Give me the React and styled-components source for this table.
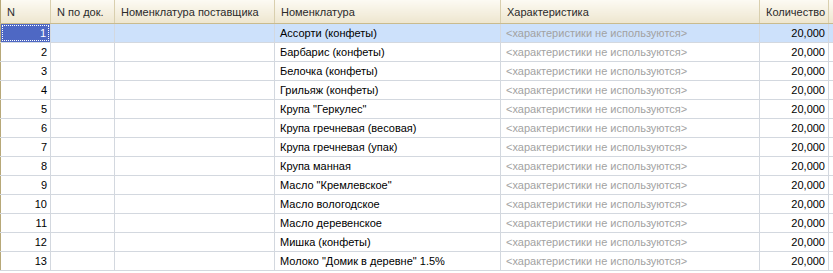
import React from "react";
import styled, { createGlobalStyle } from "styled-components";

const Global = createGlobalStyle`
  body {
    margin: 0;
    background: #ffffff;
    font-family: "Liberation Sans", Arial, sans-serif;
  }
`;

const columns = [
  { title: "N", width: 50 },
  { title: "N по док.", width: 64 },
  { title: "Номенклатура поставщика", width: 160 },
  { title: "Номенклатура", width: 226 },
  { title: "Характеристика", width: 259 },
  { title: "Количество", width: 69 },
  { title: "", width: 5 },
];

const items = [
  "Ассорти (конфеты)",
  "Барбарис (конфеты)",
  "Белочка (конфеты)",
  "Грильяж (конфеты)",
  "Крупа \"Геркулес\"",
  "Крупа гречневая (весовая)",
  "Крупа гречневая (упак)",
  "Крупа манная",
  "Масло \"Кремлевское\"",
  "Масло вологодское",
  "Масло деревенское",
  "Мишка (конфеты)",
  "Молоко \"Домик в деревне\" 1.5%",
];

const App = () => {
  return (
    <>
      <Global />
      <Grid>
        <colgroup>
          {columns.map((c, i) => (
            <col key={i} style={{ width: c.width }} />
          ))}
        </colgroup>
        <thead>
          <tr>
            {columns.map((c, i) => (
              <Head key={i}>{c.title}</Head>
            ))}
          </tr>
        </thead>
        <tbody>
          {items.map((name, i) => (
            <Row key={i} $active={i === 0}>
              <Cell $align="right">
                {i === 0 ? <Current>{i + 1}</Current> : i + 1}
              </Cell>
              <Cell />
              <Cell />
              <Cell>{name}</Cell>
              <Cell $muted>&lt;характеристики не используются&gt;</Cell>
              <Cell $align="right">20,000</Cell>
              <Cell />
            </Row>
          ))}
        </tbody>
      </Grid>
    </>
  );
};

export default App;

const Grid = styled.table`
  width: 834px;
  table-layout: fixed;
  border-collapse: collapse;
  border-left: 1px solid #b7a878;
  font-size: 11px;
  color: #000;
`;

const Head = styled.th`
  box-sizing: border-box;
  height: 23px;
  padding: 1px 0 0 6px;
  text-align: left;
  font-weight: normal;
  white-space: nowrap;
  overflow: hidden;
  color: #2a2a2a;
  background: linear-gradient(#fcfaf3, #eee6cf);
  border-right: 1px solid #d9cfae;
  border-bottom: 1px solid #c9bb8e;
`;

const Row = styled.tr`
  background: ${(p) => (p.$active ? "#cde1fb" : "#ffffff")};
`;

const Cell = styled.td`
  box-sizing: border-box;
  height: 19px;
  padding: 1px ${(p) => (p.$align === "right" ? "3px" : "5px")} 0;
  text-align: ${(p) => p.$align || "left"};
  white-space: nowrap;
  overflow: hidden;
  color: ${(p) => (p.$muted ? "#a2a2a2" : "#000")};
  border-right: 1px solid #d3d8df;
  border-bottom: 1px solid #d3d8df;
  position: relative;
`;

const Current = styled.span`
  position: absolute;
  inset: 0;
  display: flex;
  align-items: center;
  justify-content: flex-end;
  padding-right: 4px;
  background: #4e68c4;
  color: #fff;
  outline: 1px dotted #ffffff;
  outline-offset: -2px;
`;
